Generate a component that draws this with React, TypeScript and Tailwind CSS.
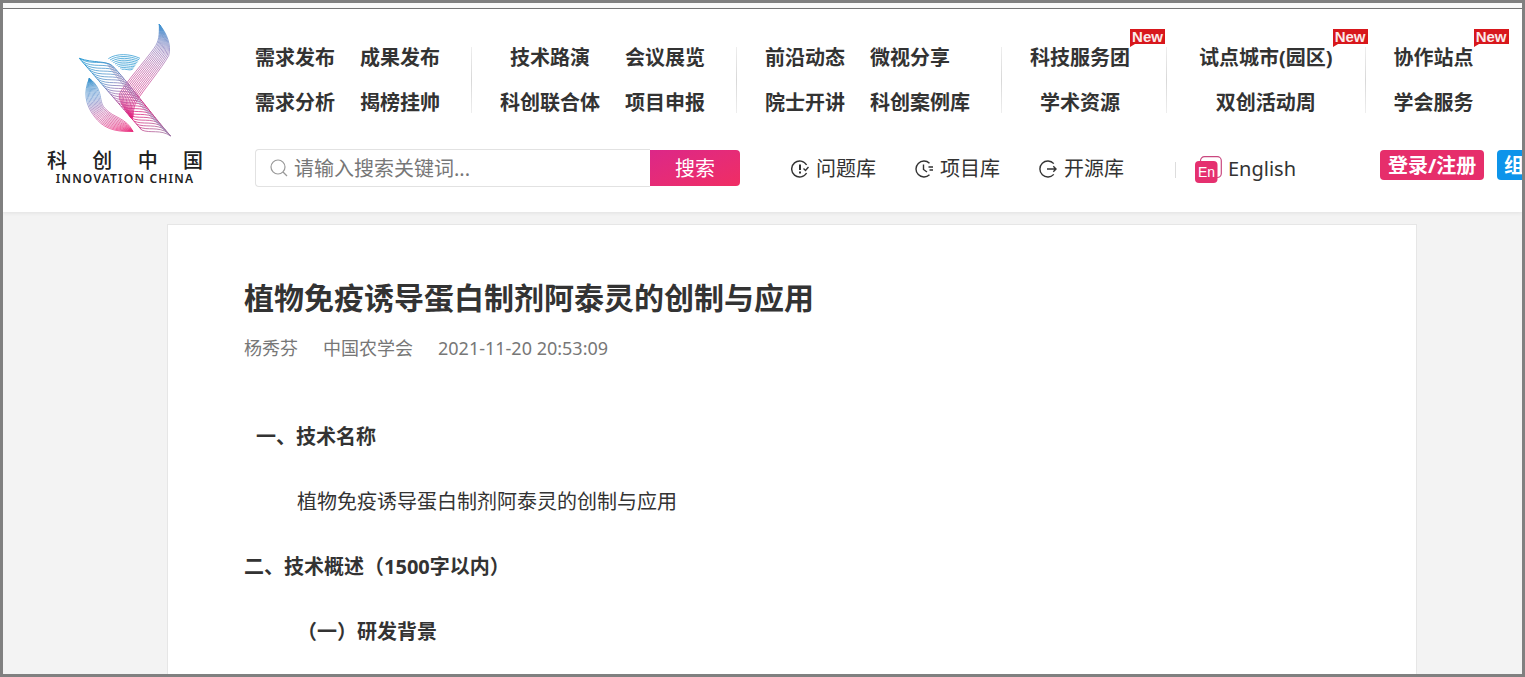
import { Fragment } from "react";

type NavItem = { label: string; isNew?: boolean };
type NavGroup = { columns: NavItem[][]; align: string; spacing: string };

const NAV_GROUPS: NavGroup[] = [
  {
    columns: [
      [{ label: "需求发布" }, { label: "需求分析" }],
      [{ label: "成果发布" }, { label: "揭榜挂帅" }],
    ],
    align: "items-start",
    spacing: "ml-[31px] mr-7",
  },
  {
    columns: [
      [{ label: "技术路演" }, { label: "科创联合体" }],
      [{ label: "会议展览" }, { label: "项目申报" }],
    ],
    align: "items-center",
    spacing: "ml-[31px] mr-7",
  },
  {
    columns: [
      [{ label: "前沿动态" }, { label: "院士开讲" }],
      [{ label: "微视分享" }, { label: "科创案例库" }],
    ],
    align: "items-start",
    spacing: "ml-[31px] mr-7",
  },
  {
    columns: [[{ label: "科技服务团", isNew: true }, { label: "学术资源" }]],
    align: "items-center",
    spacing: "ml-9 mr-8",
  },
  {
    columns: [[{ label: "试点城市(园区)", isNew: true }, { label: "双创活动周" }]],
    align: "items-center",
    spacing: "ml-8 mr-7",
  },
  {
    columns: [[{ label: "协作站点", isNew: true }, { label: "学会服务" }]],
    align: "items-center",
    spacing: "",
  },
];

// blends two bezier outlines (same number of coordinates) into a set of strands
function strands(from: number[], to: number[], count: number) {
  return Array.from({ length: count }, (_, i) => {
    const t = i / (count - 1);
    const p = from.map((v, k) => (v + (to[k] - v) * t).toFixed(1));
    return `M${p[0]} ${p[1]} C${p.slice(2).join(" ")}`;
  }).join(" ");
}

const BAND = strands(
  [28, 130, 62, 152, 98, 134, 125, 151],
  [215, 345, 240, 356, 272, 342, 302, 363],
  25,
);
const BAND_EDGES = strands(
  [28, 130, 70, 145, 108, 136, 128, 153, 165, 190, 250, 305, 302, 363],
  [28, 130, 48, 153, 80, 190, 108, 222, 150, 270, 180, 305, 215, 345],
  2,
);
// extra strands that gather towards the right edge of the band
const BAND_SHADE = strands(
  [125, 151, 165, 190, 250, 305, 302, 363],
  [112, 148, 150, 200, 235, 305, 302, 363],
  4,
);
const ARM = strands(
  [268, 28, 268, 60, 268, 78, 252, 100, 225, 138, 165, 205, 150, 234, 140, 255, 165, 280, 182, 308],
  [268, 28, 290, 55, 305, 90, 296, 122, 275, 160, 220, 225, 200, 258, 188, 278, 192, 295, 188, 308],
  12,
);
const CRESCENT = strands(
  [58, 190, 40, 230, 46, 270, 72, 303, 98, 338, 130, 352, 189, 349],
  [58, 190, 104, 225, 82, 262, 108, 283, 130, 308, 168, 308, 189, 349],
  12,
);
const LENS = strands(
  [115, 131, 140, 114, 180, 116, 210, 130],
  [155, 163, 165, 160, 178, 168, 188, 163],
  9,
);

function LogoMark() {
  return (
    <svg viewBox="0 0 330 390" className="h-[130px] w-[110px]" fill="none" aria-hidden="true">
      <defs>
        <linearGradient id="crescent" gradientUnits="userSpaceOnUse" x1="60" y1="190" x2="120" y2="350">
          <stop offset="0" stopColor="#2f8fcb" />
          <stop offset="0.35" stopColor="#6d97d0" />
          <stop offset="0.65" stopColor="#c766a8" />
          <stop offset="1" stopColor="#e8317f" />
        </linearGradient>
        <linearGradient id="band" gradientUnits="userSpaceOnUse" x1="60" y1="130" x2="260" y2="370">
          <stop offset="0" stopColor="#2f9bd3" />
          <stop offset="0.25" stopColor="#5b95cb" />
          <stop offset="0.45" stopColor="#a868ac" />
          <stop offset="0.7" stopColor="#e02580" />
          <stop offset="1" stopColor="#a5709f" />
        </linearGradient>
        <linearGradient id="arm" gradientUnits="userSpaceOnUse" x1="270" y1="30" x2="190" y2="300">
          <stop offset="0" stopColor="#3f94d2" />
          <stop offset="0.25" stopColor="#8f7bba" />
          <stop offset="0.55" stopColor="#c2529c" />
          <stop offset="1" stopColor="#e01878" />
        </linearGradient>
      </defs>
      <path d={LENS} stroke="#3aa0d4" strokeWidth="2.4" />
      <path d={CRESCENT} stroke="url(#crescent)" strokeWidth="2.2" />
      <path d={ARM} stroke="url(#arm)" strokeWidth="2.2" />
      <path d={BAND} stroke="url(#band)" strokeWidth="2.4" />
      <path d={BAND_SHADE} stroke="#8c7fb0" strokeWidth="1.5" />
      <path d={BAND_EDGES} stroke="url(#band)" strokeWidth="3" />
    </svg>
  );
}

function Logo() {
  return (
    <a href="#" className="flex w-[252px] shrink-0 flex-col items-center pt-1.5 pr-2">
      <LogoMark />
      <span className="mt-1.5 flex w-[156px] justify-between text-xl leading-5 font-medium text-[#222]">
        <span>科</span>
        <span>创</span>
        <span>中</span>
        <span>国</span>
      </span>
      <span className="text-xs leading-4 font-semibold tracking-widest whitespace-nowrap text-[#222]">
        INNOVATION CHINA
      </span>
    </a>
  );
}

function NewBadge() {
  return (
    <span className="absolute -top-1.5 left-full h-[18px] w-[35px]">
      <svg viewBox="0 0 35 18" className="absolute inset-0 h-full w-full" aria-hidden="true">
        <path d="M0 0H35V15H5L0 18Z" fill="#d8171c" />
      </svg>
      <span className="relative block text-center font-['Liberation_Sans',sans-serif] text-[15px] leading-4 font-bold text-[#fbe9e9]">
        New
      </span>
    </span>
  );
}

function MainNav() {
  return (
    <nav className="flex items-center">
      {NAV_GROUPS.map((group, i) => (
        <Fragment key={i}>
          <div className="flex shrink-0 gap-[25px]">
            {group.columns.map((column, c) => (
              <ul key={c} className={`flex flex-col ${group.align}`}>
                {column.map((item) => (
                  <li key={item.label} className="relative h-[45px] leading-[45px]">
                    <a href="#" className="text-xl leading-[45px] font-bold whitespace-nowrap">
                      {item.label}
                    </a>
                    {item.isNew && <NewBadge />}
                  </li>
                ))}
              </ul>
            ))}
          </div>
          {i < NAV_GROUPS.length - 1 && (
            <span
              className={`h-[66px] w-px shrink-0 bg-linear-to-b from-[#eee] via-[#d8d8d8] to-[#eee] ${group.spacing}`}
            />
          )}
        </Fragment>
      ))}
    </nav>
  );
}

function QuestionIcon() {
  return (
    <svg viewBox="0 0 18 18" className="size-[18px]" fill="none" stroke="#333" strokeWidth="1.4" aria-hidden="true">
      <path d="M15.6 5A8 8 0 1 0 15.6 13" />
      <path d="M12.5 8.5L14.5 10.5L17.5 7" />
      <path d="M9 4.5V10M9 11.5V13.5" strokeWidth="2" />
    </svg>
  );
}

function ProjectIcon() {
  return (
    <svg viewBox="0 0 18 18" className="size-[18px]" fill="none" stroke="#333" strokeWidth="1.4" aria-hidden="true">
      <path d="M14.5 3.2A8 8 0 1 0 14.5 14.8" />
      <path d="M8.5 4.5V9.5L12 12" />
      <path d="M13.5 7H18M14.5 10H18" />
    </svg>
  );
}

function SourceIcon() {
  return (
    <svg viewBox="0 0 18 18" className="size-[18px]" fill="none" stroke="#333" strokeWidth="1.4" aria-hidden="true">
      <path d="M14.8 3.6A8 8 0 1 0 14.8 14.4" />
      <path d="M8 9H17M14.3 6.3L17 9L14.3 11.7" />
    </svg>
  );
}

const LIBRARIES = [
  { label: "问题库", Icon: QuestionIcon },
  { label: "项目库", Icon: ProjectIcon },
  { label: "开源库", Icon: SourceIcon },
];

function EnglishIcon() {
  return (
    <span className="relative size-[27px]">
      <svg viewBox="0 0 27 27" className="absolute inset-0 h-full w-full" aria-hidden="true">
        <rect x="5.5" y="0.7" width="20.8" height="20.8" rx="4" fill="#fff" stroke="#c9477f" strokeWidth="1.2" />
        <rect x="0" y="5" width="22.5" height="22" rx="4" fill="#e5306f" />
      </svg>
      <span className="relative block w-[23px] pt-2 text-center font-['Liberation_Sans',sans-serif] text-sm leading-4 text-white">
        En
      </span>
    </span>
  );
}

function SearchBar() {
  return (
    <form className="flex w-[485px] shrink-0" onSubmit={(e) => e.preventDefault()}>
      <label className="flex h-[38px] flex-1 items-center gap-1.5 rounded-l border border-r-0 border-[#e2e2e2] pl-3.5">
        <svg viewBox="0 0 18 18" className="size-[18px] shrink-0" fill="none" stroke="#999" strokeWidth="1.2" aria-hidden="true">
          <circle cx="8" cy="8" r="7" />
          <path d="M13 13L17 17" />
        </svg>
        <input
          type="text"
          aria-label="搜索"
          placeholder="请输入搜索关键词..."
          className="w-full min-w-0 pt-0.5 text-xl leading-7 outline-none placeholder:text-[#777]"
        />
      </label>
      <button
        type="submit"
        className="my-px w-[90px] rounded-r bg-linear-to-br from-[#dc2788] to-[#f02d63] pt-0.5 text-xl leading-7 text-white"
      >
        搜索
      </button>
    </form>
  );
}

function Header() {
  return (
    <header className="flex h-[203px] overflow-hidden bg-white shadow-[0_1px_4px_rgba(0,0,0,0.08)]">
      <Logo />
      <div className="min-w-0 flex-1 pt-[26px]">
        <MainNav />
        <div className="mt-6 flex items-center text-xl leading-7 whitespace-nowrap">
          <SearchBar />
          <div className="mt-0.5 ml-[51px] flex shrink-0 gap-[39px]">
            {LIBRARIES.map(({ label, Icon }) => (
              <a key={label} href="#" className="flex items-center gap-[7px]">
                <Icon />
                {label}
              </a>
            ))}
          </div>
          <span className="mt-1 ml-[51px] h-4 w-px shrink-0 bg-[#ddd]" />
          <a href="#" className="mt-0.5 ml-[19px] flex shrink-0 items-center gap-1.5">
            <EnglishIcon />
            English
          </a>
          <div className="mb-1.5 ml-[84px] flex shrink-0 gap-[13px] font-bold text-white">
            <button type="button" className="h-[30px] w-[104px] rounded bg-[#e62e6b] pt-0.5">
              登录/注册
            </button>
            <button type="button" className="h-[30px] rounded bg-[#0d94ea] px-[7px] pt-0.5">
              组织入驻
            </button>
          </div>
        </div>
      </div>
    </header>
  );
}

function Article() {
  return (
    <article className="mt-3 mr-[105px] ml-[164px] flex-1 border border-b-0 border-[#e6e6e6] bg-white pl-[76px]">
      <h1 className="mt-[51px] text-3xl leading-[44px] font-bold">植物免疫诱导蛋白制剂阿泰灵的创制与应用</h1>
      <div className="mt-3.5 flex gap-[25px] text-lg leading-7 text-[#777]">
        <span>杨秀芬</span>
        <span>中国农学会</span>
        <time dateTime="2021-11-20T20:53:09">2021-11-20 20:53:09</time>
      </div>
      <div className="mt-[42px] text-xl leading-[65px]">
        <h2 className="pl-3 font-bold">一、技术名称</h2>
        <p className="pl-[53px]">植物免疫诱导蛋白制剂阿泰灵的创制与应用</p>
        <h2 className="font-bold">二、技术概述（1500字以内）</h2>
        <h3 className="pl-[53px] font-bold">（一）研发背景</h3>
      </div>
    </article>
  );
}

export default function App() {
  return (
    <div
      lang="zh-CN"
      className="flex min-h-screen flex-col overflow-hidden border-3 border-[#808080] bg-[#f3f3f3] font-['Noto_Sans','Noto_Sans_CJK_SC',sans-serif] text-[#333]"
    >
      <div className="h-1.5 border-b border-[#777] bg-[#fafafa]" />
      <Header />
      <Article />
    </div>
  );
}
